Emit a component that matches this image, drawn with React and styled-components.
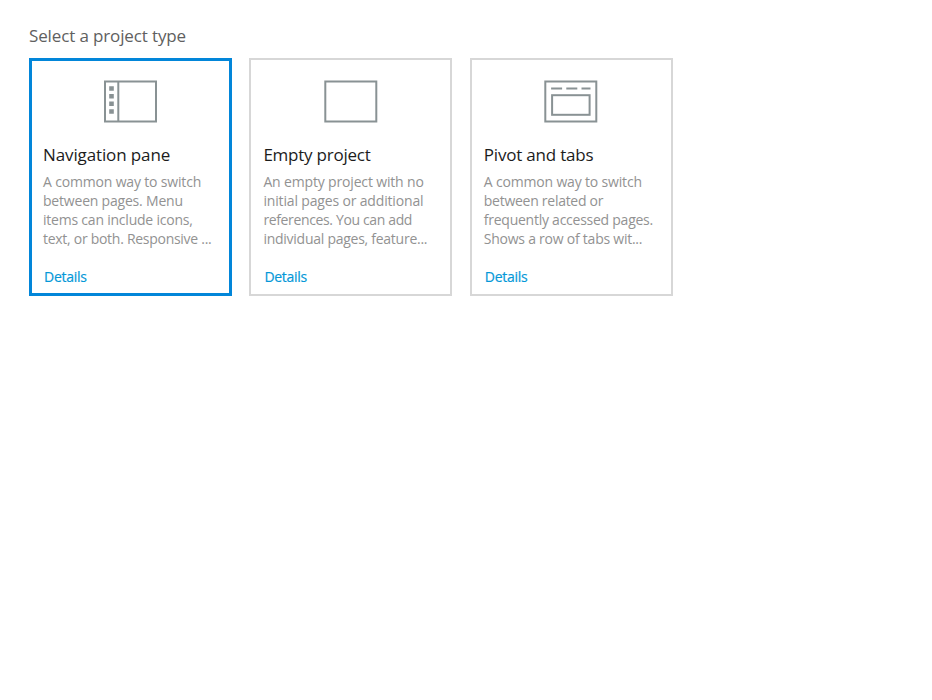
import React from "react";
import styled, { createGlobalStyle } from "styled-components";

const GlobalStyle = createGlobalStyle`
  * { box-sizing: border-box; }
  body { margin: 0; background: #fff; font-family: "Open Sans", "Noto Sans", sans-serif; }
`;

const Page = styled.main`
  min-height: 700px;
  padding: 24px 29px 23px;
  background: #fff;
`;

const Heading = styled.h1`
  margin: 0 0 10px;
  font-size: 17px;
  line-height: 24px;
  font-weight: 400;
  letter-spacing: -0.13px;
  color: #606060;
`;

const CardRow = styled.div`
  display: grid;
  grid-template-columns: repeat(3, 203px);
  column-gap: 17.4px;
`;

const Card = styled.article`
  display: flex;
  flex-direction: column;
  height: 238px;
  padding: ${(p) => (p.$selected ? "19px 0 0 11px" : "20px 0 0 12px")};
  border: ${(p) => (p.$selected ? "3px solid #0286d9" : "2px solid #d7d7d7")};
`;

const Icon = styled.svg`
  display: block;
  width: 54px;
  height: 43px;
  margin-left: 60.5px;
  fill: none;
  stroke: #899294;
  stroke-width: 2;
`;

const Title = styled.h2`
  margin: 20px 0 0;
  font-size: 17px;
  line-height: 24px;
  font-weight: 400;
  letter-spacing: ${(p) => p.$tracking}px;
  color: #1c1c1c;
  white-space: nowrap;
`;

const Description = styled.p`
  margin: 5px 0 0;
  font-size: 14px;
  line-height: 19px;
  color: #929292;
`;

const Line = styled.span`
  display: block;
  white-space: nowrap;
  letter-spacing: ${(p) => p.$tracking}px;
`;

const Details = styled.a`
  align-self: flex-start;
  margin: 19px 0 0 1px;
  font-size: 14px;
  line-height: 20px;
  font-weight: 500;
  letter-spacing: -0.28px;
  -webkit-text-stroke: 0.2px currentColor;
  color: #0498d8;
  cursor: pointer;
`;

const NavigationIcon = () => (
  <Icon viewBox="0 0 54 43">
    <rect x="1" y="1.5" width="51" height="40" />
    <path d="M14.3 1.5v40" />
    <path d="M5.2 8.6h4.6M5.2 16.2h4.6M5.2 23.8h4.6M5.2 31.5h4.6" strokeWidth="4.5" />
  </Icon>
);

const EmptyIcon = () => (
  <Icon viewBox="0 0 54 43">
    <rect x="1.3" y="1.5" width="51" height="40" />
  </Icon>
);

const PivotIcon = () => (
  <Icon viewBox="0 0 54 43">
    <rect x="1.3" y="1.5" width="51" height="40" />
    <path d="M7.1 8.6h11M22.3 8.6h11M37.5 8.6h9" />
    <rect x="8.1" y="15.2" width="37.5" height="19.6" />
  </Icon>
);

const projects = [
  {
    title: "Navigation pane",
    tracking: -0.12,
    icon: NavigationIcon,
    selected: true,
    lines: [
      ["A common way to switch", -0.17],
      ["between pages. Menu", -0.2],
      ["items can include icons,", -0.22],
      ["text, or both. Responsive ...", -0.28],
    ],
  },
  {
    title: "Empty project",
    tracking: -0.23,
    icon: EmptyIcon,
    lines: [
      ["An empty project with no", -0.16],
      ["initial pages or additional", -0.16],
      ["references. You can add", -0.36],
      ["individual pages, feature...", -0.26],
    ],
  },
  {
    title: "Pivot and tabs",
    tracking: -0.2,
    icon: PivotIcon,
    lines: [
      ["A common way to switch", -0.17],
      ["between related or", -0.27],
      ["frequently accessed pages.", -0.25],
      ["Shows a row of tabs wit...", -0.24],
    ],
  },
];

export default function App() {
  return (
    <Page>
      <GlobalStyle />
      <Heading>Select a project type</Heading>
      <CardRow>
        {projects.map(({ title, tracking, icon: ProjectIcon, selected, lines }) => (
          <Card key={title} $selected={selected}>
            <ProjectIcon />
            <Title $tracking={tracking}>{title}</Title>
            <Description>
              {lines.map(([text, lineTracking]) => (
                <Line key={text} $tracking={lineTracking}>{text}</Line>
              ))}
            </Description>
            <Details>Details</Details>
          </Card>
        ))}
      </CardRow>
    </Page>
  );
}
